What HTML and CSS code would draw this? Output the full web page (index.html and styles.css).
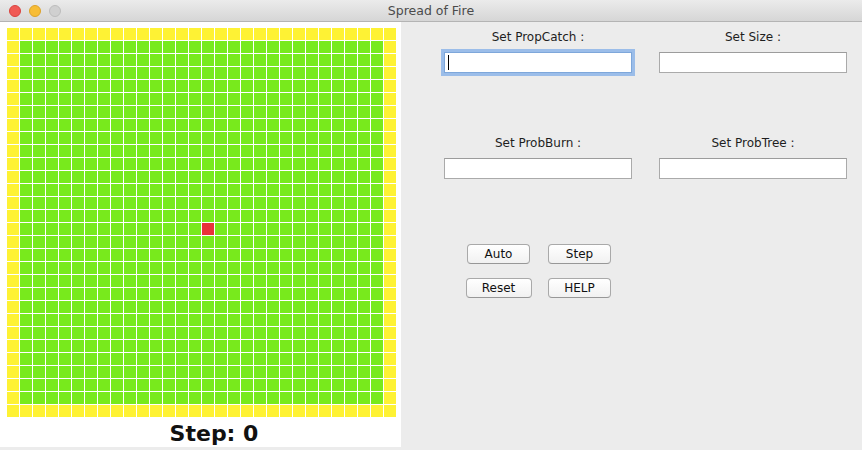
FILE: index.html
```html
<!DOCTYPE html>
<html>
<head>
<meta charset="utf-8">
<title>Spread of Fire</title>
<link rel="stylesheet" href="styles.css">
</head>
<body>
<div class="window">
  <header class="titlebar">
    <div class="lights">
      <span class="light close"></span>
      <span class="light min"></span>
      <span class="light max"></span>
    </div>
    <div class="title">Spread of Fire</div>
    <div></div>
  </header>
  <main class="content">
    <section class="sim">
      <div class="board">
        <div class="forest">
          <div class="fire"></div>
        </div>
      </div>
      <div class="step">Step: 0</div>
    </section>
    <section class="controls">
      <div class="fields">
        <div class="field-group">
          <div class="label">Set PropCatch :</div>
          <div class="input focused"><span class="caret"></span></div>
        </div>
        <div class="field-group">
          <div class="label">Set Size :</div>
          <div class="input"></div>
        </div>
        <div class="field-group">
          <div class="label">Set ProbBurn :</div>
          <div class="input"></div>
        </div>
        <div class="field-group">
          <div class="label">Set ProbTree :</div>
          <div class="input"></div>
        </div>
      </div>
      <div class="buttons">
        <button class="btn">Auto</button>
        <button class="btn">Step</button>
        <button class="btn wide">Reset</button>
        <button class="btn">HELP</button>
      </div>
    </section>
  </main>
</div>
</body>
</html>
```

FILE: styles.css
```css
* { box-sizing: border-box; }
html, body { margin: 0; padding: 0; }
body {
  font-family: "DejaVu Sans", "Liberation Sans", sans-serif;
  background: #ececec;
}
.window {
  width: 862px;
  height: 450px;
  display: flex;
  flex-direction: column;
  background: #ececec;
  overflow: hidden;
}
.titlebar {
  height: 22px;
  flex: none;
  display: grid;
  grid-template-columns: 1fr auto 1fr;
  align-items: center;
  background: linear-gradient(#ebebeb, #d6d6d6);
  border-bottom: 1px solid #b4b4b4;
}
.lights {
  display: flex;
  gap: 8px;
  padding-left: 9px;
  align-items: center;
}
.light {
  width: 12px;
  height: 12px;
  border-radius: 50%;
  display: block;
}
.light.close { background: #f05a55; border: 1px solid #d9433f; }
.light.min { background: #f7bd36; border: 1px solid #dda22a; }
.light.max { background: #d0d0d0; border: 1px solid #bdbdbd; }
.title {
  font-size: 12.5px;
  color: #4b4b4b;
  line-height: 21px;
}
.content {
  flex: 1;
  display: flex;
  align-items: flex-start;
}
.sim {
  width: 401px;
  height: 425px;
  flex: none;
  background: #ffffff;
  padding: 6px 0 0 7px;
}
.board {
  width: 389px;
  height: 389px;
  padding: 13px;
  background:
    repeating-linear-gradient(90deg, transparent 0 12px, #ffffff 12px 13px),
    repeating-linear-gradient(180deg, transparent 0 12px, #ffffff 12px 13px),
    #fef234;
}
.forest {
  width: 363px;
  height: 363px;
  display: grid;
  grid-template-columns: repeat(28, 12px);
  grid-template-rows: repeat(28, 12px);
  gap: 1px;
  background:
    repeating-linear-gradient(90deg, transparent 0 12px, #ffffff 12px 13px),
    repeating-linear-gradient(180deg, transparent 0 12px, #ffffff 12px 13px),
    #78ea1c;
}
.fire {
  grid-column: 15;
  grid-row: 15;
  background: #e8333a;
}
.step {
  margin-top: 4px;
  padding-left: 20px;
  text-align: center;
  font-size: 22px;
  font-weight: bold;
  line-height: 26px;
  color: #111;
}
.controls {
  flex: 1;
  padding: 7px 15px 0 43px;
}
.fields {
  display: grid;
  grid-template-columns: 188px 188px;
  column-gap: 27px;
  row-gap: 62px;
}
.label {
  font-size: 12px;
  line-height: 16px;
  text-align: center;
  color: #1e1e1e;
  margin-bottom: 7px;
}
.input {
  height: 21px;
  background: #ffffff;
  border: 1px solid #aaaaaa;
  border-top-color: #9c9c9c;
  padding: 2px 3px;
  display: flex;
  align-items: center;
}
.input.focused {
  border-color: #7ea7da;
  box-shadow: 0 0 0 3px rgba(128, 174, 232, 0.75);
}
.caret {
  width: 1px;
  height: 15px;
  background: #000;
}
.buttons {
  margin: 65px 0 0 14px;
  display: grid;
  grid-template-columns: 81px 81px;
  justify-items: center;
  row-gap: 14px;
}
.btn {
  width: 63px;
  height: 20px;
  padding: 0;
  font-family: "DejaVu Sans", "Liberation Sans", sans-serif;
  font-size: 12px;
  line-height: 18px;
  color: #111;
  background: linear-gradient(#ffffff, #f1f1f1);
  border: 1px solid #a9a9a9;
  border-bottom-color: #979797;
  border-radius: 4px;
}
.btn.wide { width: 66px; }
```
